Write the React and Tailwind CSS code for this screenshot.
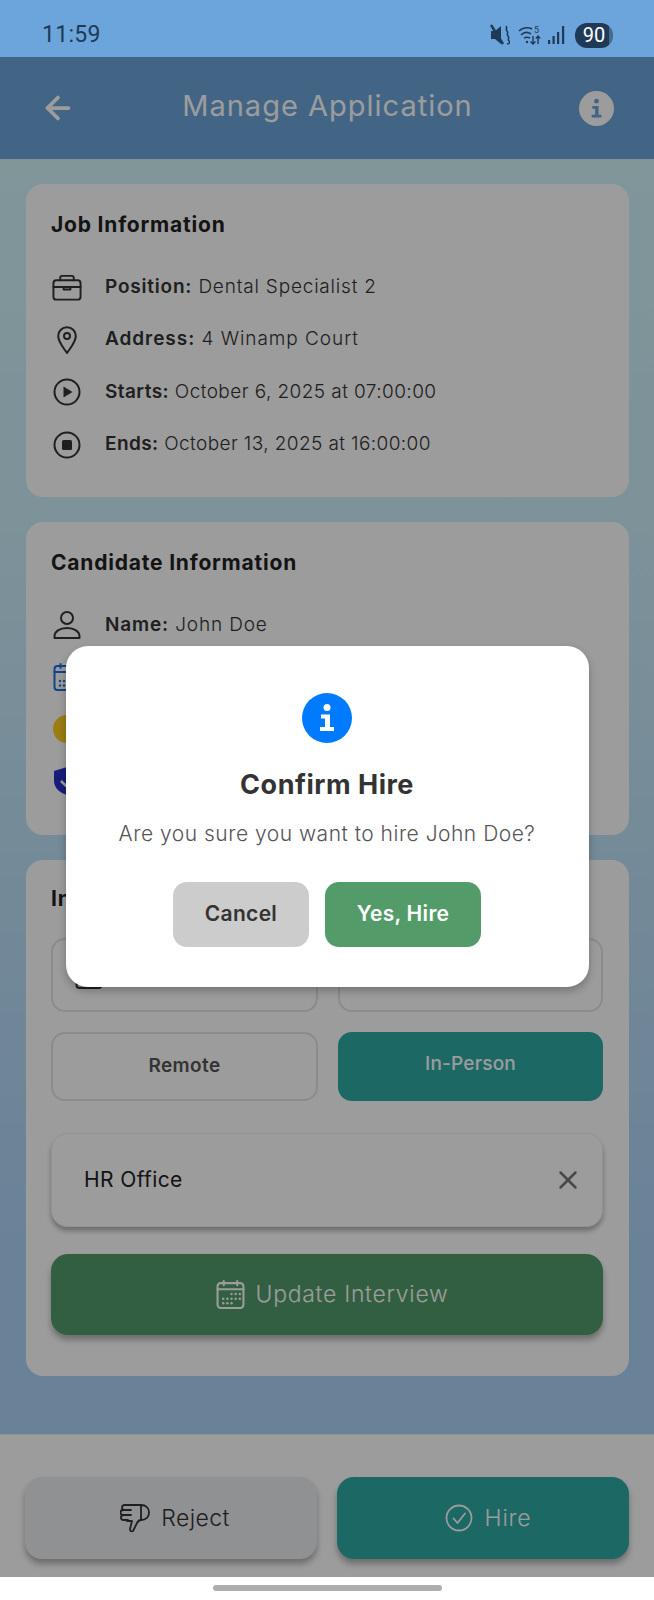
import { ArrowLeft, X } from 'lucide-react';

const font = { fontFamily: 'Inter, "Open Sans", sans-serif' };

function IconBox({ children }) {
  return <div className="w-[30px] h-[30px] flex items-center justify-center shrink-0">{children}</div>;
}

function Briefcase() {
  return (
    <svg width="31" height="27" viewBox="0 0 31 27" fill="none" stroke="#333" strokeWidth="2" strokeLinecap="round" strokeLinejoin="round">
      <rect x="1.5" y="6" width="28" height="20" rx="3" />
      <path d="M8.5 6V3.5a2 2 0 0 1 2-2h10a2 2 0 0 1 2 2V6" />
      <path d="M1.5 13h28" />
      <path d="M12 13v2.5h7V13" />
    </svg>
  );
}

function Pin() {
  return (
    <svg width="20" height="28" viewBox="0 0 20 28" fill="none" stroke="#333" strokeWidth="2" strokeLinejoin="round">
      <path d="M10 27C6 21 1.2 16 1.2 10a8.8 8.8 0 0 1 17.6 0C18.800 16 14 21 10 27z" />
      <circle cx="10" cy="10" r="3" />
    </svg>
  );
}

function PlayCircle() {
  return (
    <svg width="28" height="28" viewBox="0 0 28 28" fill="none" stroke="#333" strokeWidth="2">
      <circle cx="14" cy="14" r="12.500" />
      <path d="M10.500 8.500 19.500 14l-9 5.500z" fill="#333" stroke="none" />
    </svg>
  );
}

function StopCircle() {
  return (
    <svg width="28" height="28" viewBox="0 0 28 28" fill="none" stroke="#333" strokeWidth="2">
      <circle cx="14" cy="14" r="12.500" />
      <rect x="9" y="9" width="10" height="10" rx="1.500" fill="#333" stroke="none" />
    </svg>
  );
}

function Person() {
  return (
    <svg width="28" height="28" viewBox="0 0 28 28" fill="none" stroke="#333" strokeWidth="2" strokeLinejoin="round">
      <circle cx="14" cy="7" r="6" />
      <path d="M1.500 27v-1.500c0-5 5-8.500 12.500-8.500s12.500 3.500 12.500 8.500V27z" />
    </svg>
  );
}

function CalendarIcon({ color, size = 28 }) {
  return (
    <svg width={size} height={size} viewBox="0 0 28 28" fill="none" stroke={color} strokeWidth="2" strokeLinecap="round">
      <rect x="1.500" y="3" width="25" height="24" rx="3" />
      <path d="M1.500 9h25M7.500 1v4M20.500 1v4" />
      <g fill={color} stroke="none">
        <circle cx="7" cy="18" r="1.200" />
        <circle cx="11" cy="18" r="1.200" />
        <circle cx="15" cy="18" r="1.200" />
        <circle cx="19" cy="18" r="1.200" />
        <circle cx="7" cy="22.500" r="1.200" />
        <circle cx="11" cy="22.500" r="1.200" />
        <circle cx="15" cy="22.500" r="1.200" />
        <circle cx="15" cy="13.500" r="1.200" />
        <circle cx="19" cy="13.500" r="1.200" />
        <circle cx="23" cy="13.500" r="1.200" />
        <circle cx="23" cy="18" r="1.200" />
      </g>
    </svg>
  );
}

function Row({ icon, label, value, tracking = 'tracking-[0.4px]' }) {
  return (
    <div className="flex items-center gap-[23px] h-[30px] pl-[1px]">
      <IconBox>{icon}</IconBox>
      <p className={`text-[19px] text-[#333] whitespace-nowrap ${tracking}`}>
        <span className="font-semibold">{label}</span> <span className="font-light">{value}</span>
      </p>
    </div>
  );
}

function InfoGlyph({ size, bg, fg }) {
  return (
    <svg width={size} height={size} viewBox="0 0 50 50">
      <circle cx="25" cy="25" r="25" fill={bg} />
      <circle cx="25" cy="14.500" r="3.500" fill={fg} />
      <path d="M19 21.500h9V34h4v4H18v-4h5v-8.500h-4z" fill={fg} />
    </svg>
  );
}

function StatusBar() {
  return (
    <div className="h-[57px] bg-[#6CA5DB] flex items-center justify-between pl-[42px] pr-[41px] pt-[13px] text-[#1F3A57]">
      <span className="text-[23px] tracking-[0.3px]" style={{ fontFamily: 'Roboto, sans-serif' }}>11:59</span>
      <div className="flex items-center">
        {/* mute */}
        <svg width="20" height="22" viewBox="0 0 20 22" className="mr-[8px]">
          <path d="M1 7h4l6-5v18l-6-5H1z" fill="#1F3A57" />
          <path d="M1 1l12 19" stroke="#1F3A57" strokeWidth="2.500" />
          <path d="M16 2c2 2-1 3 1 5s-1 3 1 5-1 3 1 5-1 3-2 3" fill="none" stroke="#1F3A57" strokeWidth="1.600" />
        </svg>
        {/* wifi */}
        <svg width="24" height="22" viewBox="0 0 24 22" fill="none" stroke="#1F3A57" strokeWidth="1.600" className="mr-[6px]">
          <path d="M1 7c4-4 10-4 13-2M3 11c3-3 7-3 10-1M6 14c2-1 4-1 6 0" />
          <circle cx="9" cy="18" r="1.200" fill="#1F3A57" stroke="none" />
          <path d="M15 12v8M12.500 17.500 15 20l2.500-2.500M20 20v-8M17.800 14.500 20 12l2.200 2.500" strokeWidth="1.400" />
          <text x="16" y="9" fontSize="9" fill="#1F3A57" stroke="none" fontFamily="Roboto">5</text>
        </svg>
        {/* signal */}
        <svg width="18" height="20" viewBox="0 0 18 20" fill="#1F3A57" className="mr-[9px]">
          <rect x="0" y="15" width="2.200" height="4" />
          <rect x="4.500" y="11" width="2.200" height="8" />
          <rect x="9" y="7" width="2.200" height="12" />
          <rect x="14" y="1" width="2.200" height="18" />
        </svg>
        <span className="w-[38px] h-[25px] rounded-[12px] bg-gradient-to-r from-[#1F3A57] from-[90%] to-[#47698C] to-[90%] text-white text-[20px] flex items-center justify-center" style={{ fontFamily: 'Roboto, sans-serif' }}>90</span>
      </div>
    </div>
  );
}

function Card({ title, className, children }) {
  return (
    <div className={`bg-white rounded-[17px] pl-[25px] pr-[26px] ${className}`}>
      <h2 className="text-[21px] font-bold text-[#222] leading-[24px] tracking-[0.8px]">{title}</h2>
      {children}
    </div>
  );
}

export default function App() {
  return (
    <div className="relative w-[654px] h-[1600px] bg-white overflow-hidden flex flex-col" style={font}>
      <StatusBar />

      {/* dimmed page */}
      <div className="h-[102px] bg-[#6CA5DB] flex items-center justify-between pl-[40px] pr-[40px] shrink-0">
        <ArrowLeft size={36} color="#fff" strokeWidth={2.5} />
        <h1 className="text-[29px] text-white tracking-[1px] pb-[4px]">Manage Application</h1>
        <InfoGlyph size={35} bg="#fff" fg="#6CA5DB" />
      </div>

      <div className="h-[1275px] shrink-0 bg-gradient-to-b from-[#D2F5FA] via-[#CDEFFA] via-[28%] to-[#AED4F8] to-[85%] pl-[26px] pr-[25px] pt-[25px] flex flex-col gap-[25px]">
        <Card title="Job Information" className="h-[313px] pt-[29px]">
          <div className="mt-[35px] flex flex-col gap-[22.500px]">
            <Row icon={<Briefcase />} label="Position:" value="Dental Specialist 2" tracking="tracking-[0.8px]" />
            <Row icon={<Pin />} label="Address:" value="4 Winamp Court" tracking="tracking-[0.95px]" />
            <Row icon={<PlayCircle />} label="Starts:" value="October 6, 2025 at 07:00:00" tracking="tracking-[0.43px]" />
            <Row icon={<StopCircle />} label="Ends:" value="October 13, 2025 at 16:00:00" />
          </div>
        </Card>

        <Card title="Candidate Information" className="h-[313px] pt-[29px]">
          <div className="mt-[35px] flex flex-col gap-[22px]">
            <Row icon={<Person />} label="Name:" value="John Doe" tracking="tracking-[0.85px]" />
            <Row icon={<CalendarIcon color="#1E6FE0" />} label="" value="" />
            <Row icon={<span className="block w-[28px] h-[28px] rounded-full bg-[#FFCC1F]" />} label="" value="" />
            <Row
              icon={
                <svg width="28" height="28" viewBox="0 0 28 28">
                  <path d="M14 0 27 4v10c0 7-6 12-13 14C7 26 1 21 1 14V4z" fill="#2632C8" />
                  <path d="M8 14l4.500 4.500L20 10" fill="none" stroke="#fff" strokeWidth="2.500" />
                </svg>
              }
              label=""
              value=""
            />
          </div>
        </Card>

        <Card title="Interview" className="h-[516px] pt-[27px]">
          <div className="mt-[27px] grid grid-cols-[267px_1fr] gap-x-[20px] gap-y-[20px]">
            <div className="h-[74px] rounded-[14px] border-2 border-[#E4E4E4] flex items-center pl-[22px]">
              <CalendarIcon color="#333" />
            </div>
            <div className="h-[74px] rounded-[14px] border-2 border-[#E4E4E4]" />
            <div className="h-[69px] rounded-[14px] border-2 border-[#E4E4E4] flex items-center justify-center text-[19px] font-semibold text-[#555] tracking-[0.4px]">Remote</div>
            <div className="h-[69px] rounded-[14px] bg-[#2FAAA5] flex items-center justify-center pb-[4px] text-[19px] font-medium text-white tracking-[0.2px]">In-Person</div>
          </div>

          <div className="mt-[32px] h-[94px] rounded-[17px] border border-[#F0F0F0] shadow-[0_4px_5px_rgba(0,0,0,0.3)] flex items-center justify-between pl-[32px] pr-[19px]">
            <span className="text-[21px] text-[#222] tracking-[0.4px]">HR Office</span>
            <X size={30} color="#777" strokeWidth={2} />
          </div>

          <div className="mt-[27px] h-[81px] rounded-[17px] bg-[#539C6A] shadow-[0_5px_6px_rgba(0,0,0,0.3)] flex items-center justify-center gap-[11px] pl-[10px]">
            <CalendarIcon color="#fff" size={29} />
            <span className="text-[23px] text-white font-light tracking-[0.7px]">Update Interview</span>
          </div>
        </Card>
      </div>

      <div className="h-[143px] shrink-0 bg-white border-t border-[#EEE] px-[25px] pt-[42px] grid grid-cols-2 gap-x-[20px]">
        <div className="h-[82px] rounded-[17px] bg-[#EBEDF1] shadow-[0_5px_6px_rgba(0,0,0,0.3)] flex items-center justify-center gap-[11px] pl-[8px]">
          <svg width="30" height="30" viewBox="0 0 30 30" fill="none" stroke="#333" strokeWidth="1.800" strokeLinejoin="round" strokeLinecap="round">
            <path d="M8 2h13c5 0 8 3 8 7.500S26 17 21 17c-2 0-3 1-4 3l-4 8c-2 1-3 0-3-2l2-8H7" />
            <path d="M8 2H4.500a2 2 0 0 0 0 5H3a2 2 0 0 0 0 5h.5a2 2 0 0 0 0 5H8" />
            <path d="M3 7h8M3 12h8M21 2v15" />
          </svg>
          <span className="text-[23px] text-[#333] font-light tracking-[0.4px]">Reject</span>
        </div>
        <div className="h-[82px] rounded-[17px] bg-[#2FAAA5] shadow-[0_5px_6px_rgba(0,0,0,0.3)] flex items-center justify-center gap-[12px] pl-[10px]">
          <svg width="28" height="28" viewBox="0 0 28 28" fill="none" stroke="#fff" strokeWidth="1.800" strokeLinecap="round" strokeLinejoin="round">
            <circle cx="14" cy="14" r="12.500" />
            <path d="M8.500 14.500 12.500 19 20 9.500" />
          </svg>
          <span className="text-[23px] text-white font-light tracking-[0.8px]">Hire</span>
        </div>
      </div>

      <div className="flex-1 flex justify-center pt-[8px]">
        <div className="w-[229px] h-[6px] rounded-full bg-[#ADADAD]" />
      </div>

      {/* dialog overlay */}
      <div className="absolute left-0 right-0 top-[57px] h-[1520px] bg-black/[0.39]">
        <div className="absolute left-[65.500px] top-[589px] w-[523px] h-[341px] bg-white rounded-[22px] shadow-[0_4px_8px_rgba(0,0,0,0.25)] flex flex-col items-center pt-[47px]">
          <InfoGlyph size={50} bg="#007AFF" fg="#fff" />
          <h3 className="mt-[24px] text-[27px] font-bold text-[#333] leading-[36px] tracking-[0.5px]">Confirm Hire</h3>
          <p className="mt-[16px] text-[21px] font-light text-[#555] leading-[30px] tracking-[0.5px] whitespace-nowrap">Are you sure you want to hire John Doe?</p>
          <div className="mt-[33px] flex gap-[16px]">
            <button className="w-[136px] h-[65px] pb-[2px] rounded-[14px] bg-[#CCCCCC] text-[21px] font-semibold text-[#333] tracking-[0.3px]">Cancel</button>
            <button className="w-[156px] h-[65px] pb-[2px] rounded-[14px] bg-[#539C6A] text-[21px] font-semibold text-white tracking-[0.3px]">Yes, Hire</button>
          </div>
        </div>
      </div>
    </div>
  );
}
